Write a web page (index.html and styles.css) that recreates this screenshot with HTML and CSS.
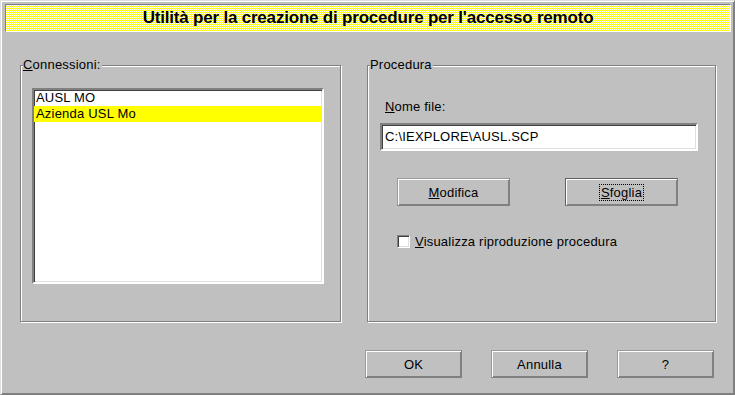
FILE: index.html
```html
<!DOCTYPE html>
<html lang="it">
<head>
  <meta charset="UTF-8" />
  <title>Utilità per la creazione di procedure per l'accesso remoto</title>
  <link rel="stylesheet" href="styles.css">
</head>
<body>
  <div class="window">
    <header class="banner">Utilità per la creazione di procedure per l'accesso remoto</header>

    <div class="groups">
      <section class="group group-left">
        <span class="group-title"><u>C</u>onnessioni:</span>
        <ul class="listbox">
          <li>AUSL MO</li>
          <li class="selected">Azienda USL Mo</li>
        </ul>
      </section>

      <section class="group group-right">
        <span class="group-title">Procedura</span>
        <label class="field-label" for="nome-file"><u>N</u>ome file:</label>
        <div class="textbox" id="nome-file">C:\IEXPLORE\AUSL.SCP</div>

        <div class="button-row">
          <button class="btn btn-wide"><u>M</u>odifica</button>
          <button class="btn btn-wide btn-default"><span class="focus"><u>S</u>foglia</span></button>
        </div>

        <div class="check-row">
          <span class="checkbox"></span>
          <span><u>V</u>isualizza riproduzione procedura</span>
        </div>
      </section>
    </div>

    <footer class="dialog-buttons">
      <button class="btn">OK</button>
      <button class="btn">Annulla</button>
      <button class="btn">?</button>
    </footer>
  </div>
</body>
</html>
```

FILE: styles.css
```css
html, body {
  margin: 0;
  background: #c0c0c0;
}

body {
  font-family: 'Liberation Sans', Arial, sans-serif;
  font-size: 13px;
  letter-spacing: 0.2px;
  color: #000;
}

u {
  text-decoration: underline;
  text-underline-offset: 1px;
}

.window {
  width: 735px;
  height: 395px;
  box-sizing: border-box;
  background: #c0c0c0;
  border: 1px solid;
  border-color: #dfdfdf #808080 #808080 #dfdfdf;
  box-shadow: inset 1px 1px 0 #fff, inset -1px -1px 0 #808080;
  padding: 3px 3px 0 4px;
}

.banner {
  height: 28px;
  box-sizing: border-box;
  border: 1px solid;
  border-color: #808080 #fff #fff #808080;
  background: repeating-conic-gradient(#ffff00 0 25%, #ffffff 0 50%) 0 0 / 2px 2px;
  text-align: center;
  font-size: 17px;
  font-weight: bold;
  line-height: 25px;
  letter-spacing: -0.2px;
}

.groups {
  display: flex;
  gap: 26px;
  margin: 33px 0 0 15px;
}

.group {
  position: relative;
  height: 257px;
  box-sizing: border-box;
  border: 1px solid #808080;
  box-shadow: 1px 1px 0 #fff, inset 1px 1px 0 #fff;
}

.group-title {
  position: absolute;
  top: -8px;
  left: 2px;
  background: #c0c0c0;
  line-height: 14px;
  padding-right: 1px;
}

.group-left {
  width: 321px;
  padding: 22px 0 0 11px;
}

.group-right {
  width: 349px;
  padding: 33px 0 0 12px;
}

.listbox {
  list-style: none;
  margin: 0;
  padding: 0;
  width: 292px;
  height: 196px;
  box-sizing: border-box;
  background: #fff;
  border: 2px solid;
  border-color: #808080 #fff #fff #808080;
  box-shadow: inset 1px 1px 0 #404040, inset -1px -1px 0 #dfdfdf;
  padding: 0 1px 0 0;
}

.listbox li {
  height: 16px;
  line-height: 16px;
  padding-left: 2px;
}

.listbox .selected {
  background: #ffff00;
}

.field-label {
  display: block;
  margin-left: 5px;
  line-height: 15px;
  margin-bottom: 9px;
}

.textbox {
  width: 318px;
  height: 28px;
  box-sizing: border-box;
  background: #fff;
  border: 2px solid;
  border-color: #808080 #fff #fff #808080;
  box-shadow: inset 1px 1px 0 #404040, inset -1px -1px 0 #dfdfdf;
  padding-left: 3px;
  line-height: 24px;
}

.button-row {
  display: flex;
  gap: 55px;
  margin: 27px 0 0 17px;
}

.btn {
  width: 97px;
  height: 28px;
  box-sizing: border-box;
  margin: 0;
  padding: 0;
  font: inherit;
  letter-spacing: inherit;
  color: #000;
  background: #c0c0c0;
  border: 1px solid;
  border-color: #9a9a9a #808080 #808080 #9a9a9a;
  box-shadow: inset 1px 1px 0 #fff, inset -1px -1px 0 #808080;
}

.btn-wide {
  width: 113px;
}

.btn-default {
  border-color: #606060 #808080 #808080 #606060;
}

.focus {
  outline: 1px dotted #000;
  outline-offset: 0;
  padding: 0 1px;
}

.check-row {
  display: flex;
  align-items: center;
  gap: 5px;
  margin: 28px 0 0 17px;
}

.checkbox {
  width: 13px;
  height: 13px;
  box-sizing: border-box;
  background: #fff;
  border: 1px solid;
  border-color: #808080 #fff #fff #808080;
  box-shadow: inset 1px 1px 0 #404040, inset -1px -1px 0 #dfdfdf;
}

.dialog-buttons {
  display: flex;
  justify-content: flex-end;
  gap: 29px;
  margin: 28px 17px 0 0;
}
```
